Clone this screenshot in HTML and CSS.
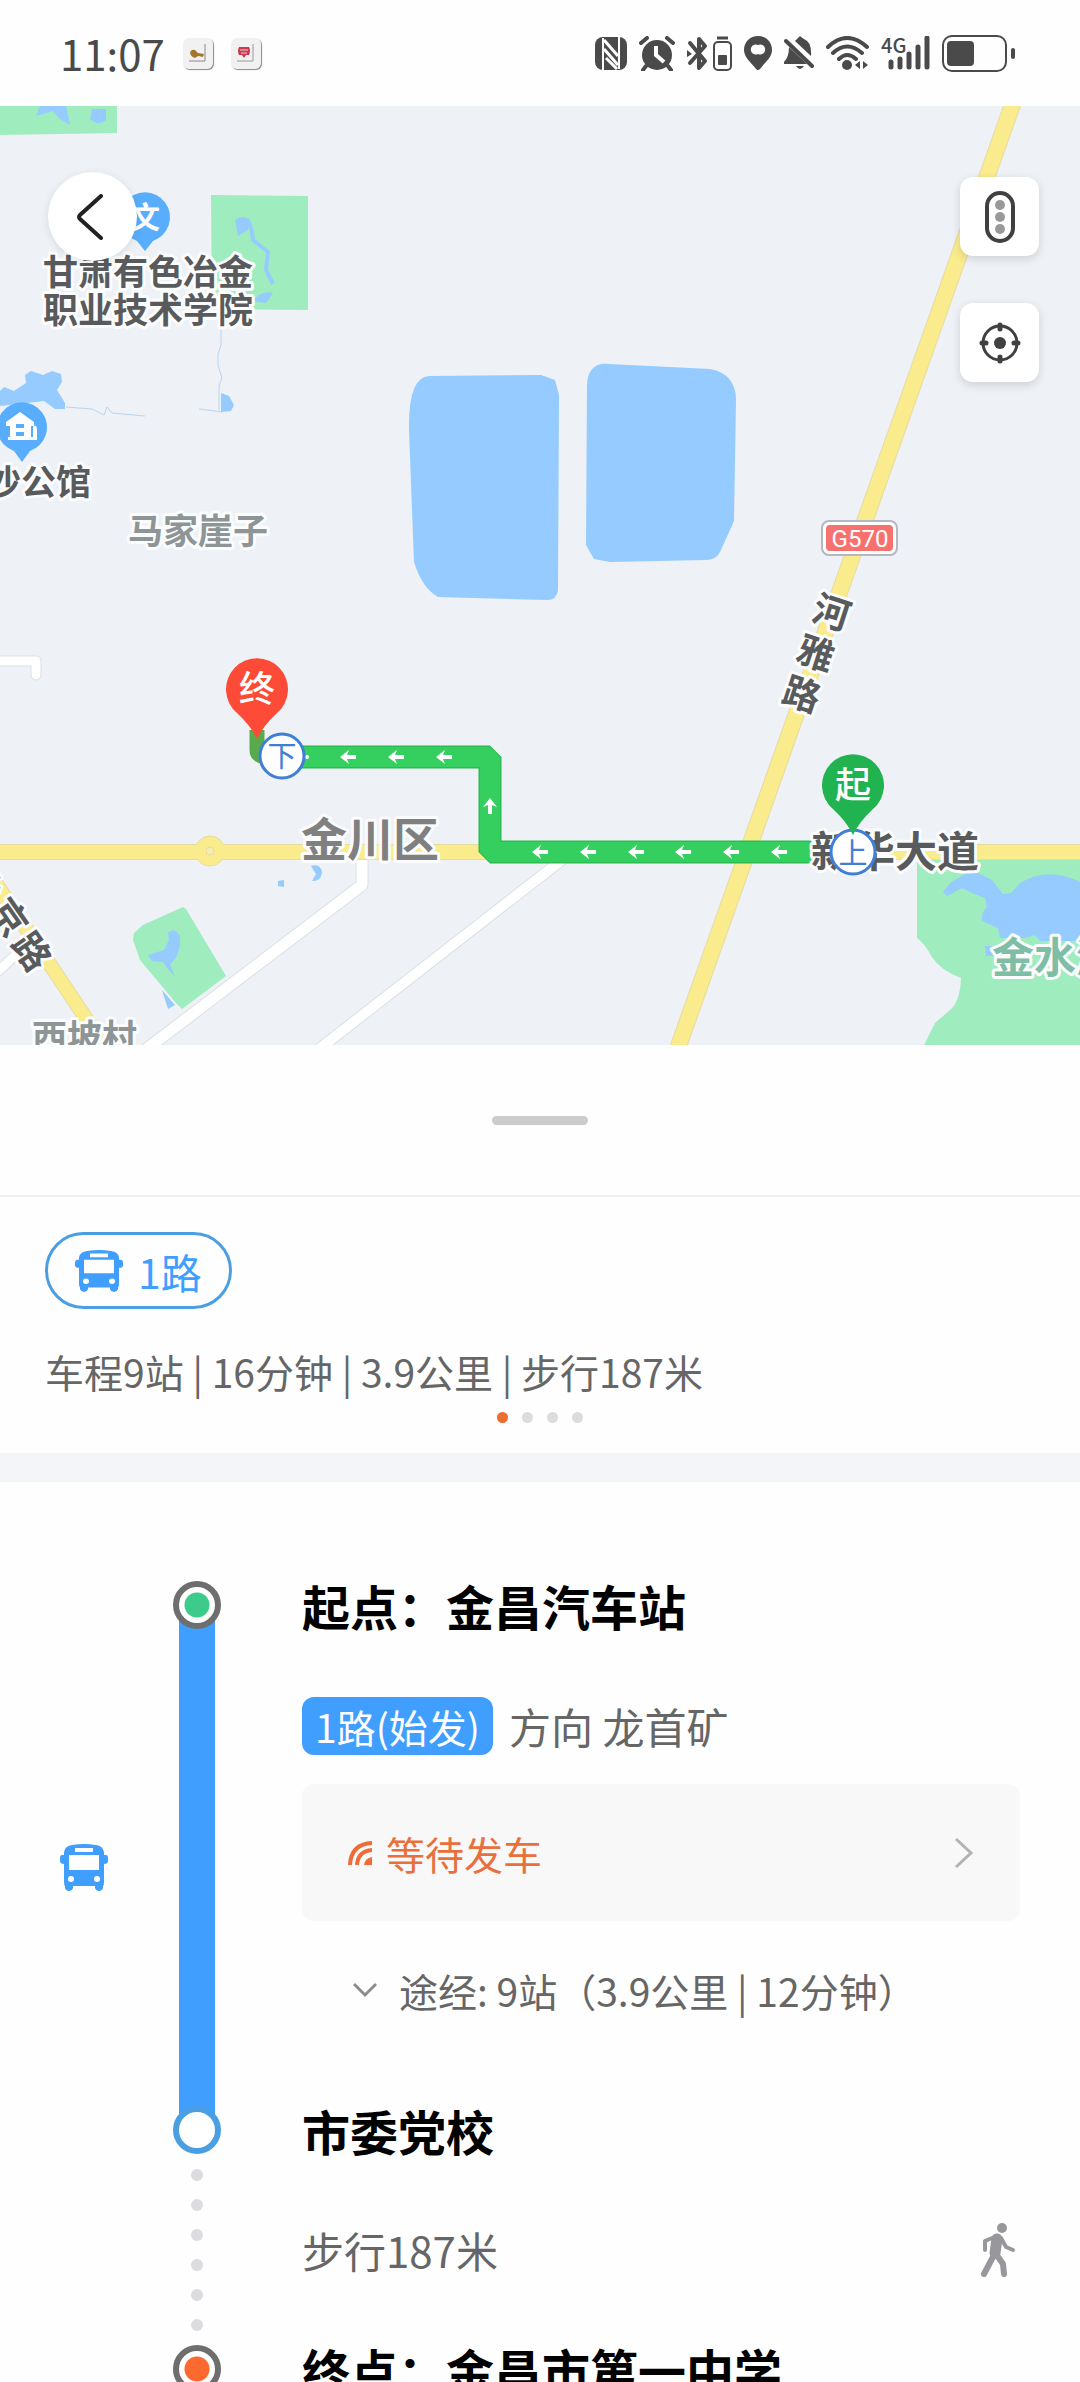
FILE: index.html
```
<!DOCTYPE html>
<html lang="zh-CN">
<head>
  <meta charset="UTF-8">
  <meta name="viewport" content="width=device-width, initial-scale=1.0">
  <title>公交路线 - 1路</title>
  <link rel="stylesheet" href="styles.css">
</head>
<body>
  <!-- Shared icons -->
  <svg class="sprite" aria-hidden="true">
    <symbol id="icon-bus" viewBox="0 0 48 47" preserveAspectRatio="none">
      <path fill="currentColor" fill-rule="evenodd" d="M12 1 Q24 -1 36 1 Q43 2 44 8 V11 H46 Q48 11 48 14 V17 Q48 20 44 20 V38 Q44 41 43 42 V44 Q42 47 39 47 Q36 47 35 44 V42 H13 V44 Q12 47 9 47 Q6 47 5 44 V42 Q4 41 4 38 V20 Q0 20 0 17 V14 Q0 11 2 11 H4 V8 Q5 2 12 1 Z M15 4 V8 H33 V4 Z M9 11 V26 H39 V11 Z M11 32 A3 3 0 1 0 11 38 A3 3 0 1 0 11 32 Z M37 32 A3 3 0 1 0 37 38 A3 3 0 1 0 37 32 Z"/>
    </symbol>
    <symbol id="arrow" viewBox="-9 -9 18 18">
      <path d="M-8 0 L1 -7 L-1 -2 H8 V2 H-1 L1 7 Z" fill="#fff"/>
    </symbol>
  </svg>

  <div class="app">
    <header class="status-bar">
      <div class="status-left">
        <span class="time">11:07</span>
        <span class="notice">
          <svg width="30" height="31" viewBox="0 0 30 31" aria-hidden="true">
            <path d="M22 6 V23 H6" fill="none" stroke="#888" stroke-width="1"/>
            <path d="M7 15 Q8 11 12 12 L15 15 L21 16 L20 19 L15 18 L12 20 Q8 19 7 15 Z" fill="#a5752c"/>
          </svg>
        </span>
        <span class="notice">
          <svg width="30" height="31" viewBox="0 0 30 31" aria-hidden="true">
            <path d="M22 6 V23 H6" fill="none" stroke="#999" stroke-width="1"/>
            <path d="M8 9 H18 Q20 12 18 17 H15 L13 20 L11 17 H8 Q6 13 8 9 Z" fill="#c83a50"/>
            <path d="M9 12 H17 M10 15 H16" stroke="#f3c9cf" stroke-width="1"/>
          </svg>
        </span>
      </div>
      <div class="status-right">
        <!-- NFC -->
        <svg width="32" height="33" viewBox="0 0 32 33" aria-hidden="true">
          <rect x="0" y="0" width="32" height="33" rx="8" fill="#4a4a4a"/>
          <path d="M8 33 V1 M24 32 V0" stroke="#fff" stroke-width="2"/>
          <path d="M9 3 L23 19 M9 12 L23 28 M11 21 L22 32" fill="none" stroke="#fff" stroke-width="3"/>
        </svg>
        <!-- Alarm -->
        <svg width="36" height="35" viewBox="0 0 36 35" aria-hidden="true">
          <circle cx="18" cy="19" r="15" fill="#4a4a4a"/>
          <path d="M2 7 L8 2 M34 7 L28 2 M7 30 L4 34 M29 30 L32 34" stroke="#4a4a4a" stroke-width="4" stroke-linecap="round"/>
          <path d="M17 10 V19 L25 26" fill="none" stroke="#fff" stroke-width="4"/>
        </svg>
        <!-- Bluetooth with device battery -->
        <svg width="45" height="35" viewBox="0 0 45 35" aria-hidden="true">
          <path d="M3 7 L18 25 L12 32 V3 L18 10 L3 27" fill="none" stroke="#4a4a4a" stroke-width="4" stroke-linejoin="round" stroke-linecap="round"/>
          <path d="M0 14 L5 18 L0 21 Z" fill="#4a4a4a"/>
          <rect x="27" y="6" width="17" height="28" rx="4" fill="none" stroke="#4a4a4a" stroke-width="2"/>
          <path d="M30 2 H41" stroke="#4a4a4a" stroke-width="3"/>
          <rect x="31" y="19" width="9" height="10" rx="1" fill="#4a4a4a"/>
        </svg>
        <!-- Location -->
        <svg width="28" height="34" viewBox="0 0 28 34" aria-hidden="true">
          <path fill="#4a4a4a" fill-rule="evenodd" d="M14 0 C6 0 0 6 0 14 C0 22 8 27 12 33 Q14 35 16 33 C20 27 28 22 28 14 C28 6 22 0 14 0 Z M14 9 A5 5 0 1 1 14 18 A5 5 0 1 1 14 9 Z"/>
        </svg>
        <!-- Muted -->
        <svg width="30" height="34" viewBox="0 0 30 34" aria-hidden="true">
          <path d="M16 0 Q18 2 20 3 Q28 6 27 20 L11 5 Q13 3 14 2 Z M5 11 L23 28 H0 V26 Q5 21 5 11 Z M12 30 H20 Q16 36 12 30 Z" fill="#4a4a4a"/>
          <path d="M2 5 L28 30" stroke="#4a4a4a" stroke-width="4" stroke-linecap="round"/>
        </svg>
        <!-- Wi-Fi -->
        <svg width="43" height="34" viewBox="0 0 43 34" aria-hidden="true">
          <path d="M2 11 Q21 -7 41 11 M7 17 Q21 4 36 17 M13 23 Q21 15 30 23" fill="none" stroke="#4a4a4a" stroke-width="4" stroke-linecap="round"/>
          <circle cx="21" cy="29" r="5" fill="#4a4a4a"/>
          <path d="M34 25 V33 L29 29 Z M37 25 V33 L42 29 Z" fill="#4a4a4a"/>
        </svg>
        <!-- Signal -->
        <svg width="49" height="34" viewBox="0 0 49 34" aria-hidden="true">
          <text x="0" y="17" class="net">4G</text>
          <path d="M10 26 V31 M19 23 V31 M28 18 V31 M37 11 V31 M46 2 V31" stroke="#4a4a4a" stroke-width="5" stroke-linecap="round"/>
        </svg>
        <!-- Battery -->
        <svg width="73" height="37" viewBox="0 0 73 37" aria-hidden="true">
          <rect x="1" y="1" width="63" height="35" rx="9" fill="none" stroke="#4a4a4a" stroke-width="2"/>
          <rect x="5" y="6" width="27" height="25" rx="4" fill="#4a4a4a"/>
          <rect x="69" y="13" width="4" height="11" rx="2" fill="#4a4a4a"/>
        </svg>
      </div>
    </header>

    <section class="map">
      <svg class="map-canvas" viewBox="0 106 1080 939" role="img" aria-label="路线地图">
        <!-- Parks -->
        <g fill="#9fecbf">
          <path d="M0 106 H117 V133 L0 135 Z"/>
          <path d="M211 195 L308 196 V310 L212 309 Z"/>
          <path d="M134 933 L143 925 L183 907 L186 909 L226 976 L182 1009 L176 1003 L140 960 L133 940 Z"/>
          <path d="M917 860 H1080 V1045 H924 L935 1023 L950 1010 Q960 1002 961 978 Q940 970 932 957 Q925 944 917 938 Z"/>
        </g>

        <!-- Water -->
        <g fill="#95cbfe">
          <path d="M40 106 H66 L70 125 L60 119 L53 111 L36 116 Z M92 109 H106 V120 Q99 127 90 119 Z"/>
          <path d="M0 391 L4 387 L14 391 L26 383 L25 375 L31 371 L43 375 L52 371 L61 374 L62 382 L57 390 L65 403 L65 409 L55 409 L44 401 L0 406 Z"/>
          <path d="M409 430 Q408 376 430 376 L541 375 L555 380 L559 395 L558 590 Q557 600 547 600 L438 597 Q422 588 414 562 Z"/>
          <path d="M587 385 Q588 362 609 364 L710 369 Q736 374 736 400 L734 521 L720 552 Q716 560 706 560 L610 562 L594 559 L586 545 Z"/>
          <path d="M943 892 L950 883 L965 874 L978 873 L992 880 L1003 894 L1011 893 L1020 883 Q1048 866 1080 882 V941 H1040 L1035 935 L1025 938 L1000 938 L998 928 L982 921 Q981 912 987 907 L985 898 L972 893 L962 888 L947 896 Z"/>
          <path d="M985 946 H1000 V956 H986 Z"/>
          <path d="M168 932 L174 930 L180 935 L180 946 L176 958 L170 964 L175 977 L167 968 L163 962 L152 961 L148 955 L164 950 L169 940 Z M162 990 L175 1005 L168 1009 Z"/>
          <path d="M278 881 L284 880 V887 L278 886 Z M311 866 Q321 863 322 873 Q320 882 312 881 L316 874 Z"/>
          <path d="M221 393 L229 396 L234 405 L231 411 L221 412 Z M253 301 Q262 290 273 293 L266 303 Z"/>
        </g>
        <path d="M235 220 Q243 214 250 220 L248 230 L238 236 Z" fill="#95cbfe"/>
        <path d="M248 220 Q252 228 253 240 L268 252 L266 270 L273 284" fill="none" stroke="#95cbfe" stroke-width="4"/>
        <path d="M221 330 V345 L218 354 V365 L222 378 L219 386 V410 M66 407 L92 409 L104 415 L107 407 L112 413 L145 416 M199 409 L223 412" fill="none" stroke="#b9d4ee" stroke-width="1"/>

        <!-- Minor roads -->
        <g fill="none" stroke-linejoin="round">
          <g stroke="#dcdfe5">
            <path d="M-5 661 H36 V675" stroke-width="11" stroke-linecap="round"/>
            <path d="M-6 975 L36 936" stroke-width="11"/>
            <path d="M362 852 V885 L140 1054" stroke-width="13"/>
            <path d="M572 852 L310 1056" stroke-width="12"/>
          </g>
          <g stroke="#fff">
            <path d="M-5 661 H36 V675" stroke-width="9" stroke-linecap="round"/>
            <path d="M-6 975 L36 936" stroke-width="9"/>
            <path d="M362 852 V885 L140 1054" stroke-width="11"/>
            <path d="M572 852 L310 1056" stroke-width="10"/>
          </g>
        </g>

        <!-- Main roads -->
        <g fill="none" stroke="#e6dca0">
          <path d="M-5 882 L105 1047" stroke-width="15"/>
          <path d="M0 852 H1080" stroke-width="16"/>
          <path d="M1017 92 L675 1056" stroke-width="17"/>
        </g>
        <circle cx="210" cy="851" r="15" fill="#faec8d" stroke="#e6dca0"/>
        <g fill="none" stroke="#faec8d">
          <path d="M-5 882 L105 1047" stroke-width="13"/>
          <path d="M0 852 H1080" stroke-width="14"/>
          <path d="M1017 92 L675 1056" stroke-width="15"/>
        </g>
        <circle cx="210" cy="851" r="4" fill="#f5ecb4" stroke="#e6dca0"/>

        <!-- Bus route -->
        <path d="M257 730 V750 Q257 757 268 757" fill="none" stroke="#58aa4c" stroke-width="15"/>
        <path d="M290 757 H490 V852 H815" fill="none" stroke="#2bbb53" stroke-width="23" stroke-linejoin="bevel"/>
        <path d="M290 757 H490 V852 H815" fill="none" stroke="#34cf5e" stroke-width="20" stroke-linejoin="bevel"/>
        <use href="#arrow" x="339" y="748" width="18" height="18"/>
        <use href="#arrow" x="387" y="748" width="18" height="18"/>
        <use href="#arrow" x="435" y="748" width="18" height="18"/>
        <use href="#arrow" x="481" y="797" width="18" height="18" transform="rotate(90 490 806)"/>
        <use href="#arrow" x="531" y="843" width="18" height="18"/>
        <use href="#arrow" x="579" y="843" width="18" height="18"/>
        <use href="#arrow" x="627" y="843" width="18" height="18"/>
        <use href="#arrow" x="674" y="843" width="18" height="18"/>
        <use href="#arrow" x="722" y="843" width="18" height="18"/>
        <use href="#arrow" x="770" y="843" width="18" height="18"/>
        <circle cx="307" cy="757" r="2" fill="#fff"/>

        <!-- Place pins -->
        <path d="M145 251 L137 241 A25 25 0 1 1 153 241 Z" fill="#58aefc"/>
        <text x="145" y="228" class="pin-text poi">文</text>
        <path d="M22 462 L14 451 A25 25 0 1 1 30 451 Z" fill="#58aefc"/>
        <path fill="#fff" fill-rule="evenodd" d="M20 412 L34 422 V426 H31 V437 H33 V427 Q36 423 37 429 V440 H8 V437 H10 V426 H6 V422 Z M16 424 V428 H24 V424 Z M16 432 V436 H24 V432 Z"/>

        <!-- Labels -->
        <g class="label">
          <text x="43" y="285" class="place">甘肃有色冶金</text>
          <text x="43" y="323" class="place">职业技术学院</text>
          <text x="91" y="495" class="place" text-anchor="end">沙公馆</text>
          <text x="128" y="544" class="place village">马家崖子</text>
          <text x="32" y="1050" class="place village">西坡村</text>
          <text x="301" y="856" class="district">金川区</text>
          <text x="811" y="867" class="road">新华大道</text>
          <text x="992" y="973" class="road park">金水湖</text>
        </g>
        <g class="label road-sm" text-anchor="middle">
          <text transform="translate(832 612) rotate(18)" y="14">河</text>
          <text transform="translate(816 653) rotate(18)" y="14">雅</text>
          <text transform="translate(802 694) rotate(18)" y="14">路</text>
          <text transform="translate(-17 882) rotate(55)" y="14">北</text>
          <text transform="translate(9 917) rotate(55)" y="14">京</text>
          <text transform="translate(32 951) rotate(55)" y="14">路</text>
        </g>

        <!-- Highway shield -->
        <rect x="822" y="521" width="75" height="34" rx="7" fill="#fff" stroke="#b4b8c0" stroke-width="2"/>
        <rect x="826" y="525" width="67" height="26" rx="4" fill="#f7716f"/>
        <text x="860" y="547" class="shield">G570</text>

        <!-- Stops and route ends -->
        <circle cx="282" cy="756" r="22" fill="#fff" stroke="#3f7fd6" stroke-width="3"/>
        <text x="282" y="767" class="pin-text stop-text">下</text>
        <circle cx="853" cy="852" r="22" fill="#fff" stroke="#3f7fd6" stroke-width="3"/>
        <text x="853" y="864" class="pin-text stop-text">上</text>
        <path d="M257 739 Q251 726 237 713 A31 31 0 1 1 277 713 Q263 726 257 739 Z" fill="#fd4b38"/>
        <text x="257" y="702" class="pin-text">终</text>
        <path d="M853 835 Q847 822 833 809 A31 31 0 1 1 873 809 Q859 822 853 835 Z" fill="#20b34f"/>
        <text x="853" y="798" class="pin-text">起</text>
      </svg>

      <button class="back" type="button" aria-label="返回">
        <svg width="26" height="46" viewBox="0 0 26 46" aria-hidden="true">
          <path d="M24 2 L3 21 Q1 23 3 25 L24 44" fill="none" stroke="#222" stroke-width="4" stroke-linecap="round"/>
        </svg>
      </button>
      <div class="map-tools">
        <button class="tool" type="button" aria-label="路况">
          <svg width="30" height="52" viewBox="0 0 30 52" aria-hidden="true">
            <rect x="2" y="2" width="26" height="48" rx="13" fill="none" stroke="#404040" stroke-width="4"/>
            <g fill="#999"><circle cx="15" cy="14" r="5"/><circle cx="15" cy="26" r="5"/><circle cx="15" cy="38" r="5"/></g>
          </svg>
        </button>
        <button class="tool" type="button" aria-label="定位">
          <svg width="42" height="42" viewBox="0 0 42 42" aria-hidden="true">
            <circle cx="21" cy="21" r="17" fill="none" stroke="#404040" stroke-width="3"/>
            <circle cx="21" cy="21" r="6" fill="#404040"/>
            <path d="M21 3 V7 M21 35 V39 M3 21 H7 M35 21 H39" stroke="#404040" stroke-width="5" stroke-linecap="round"/>
          </svg>
        </button>
      </div>
    </section>

    <main class="sheet">
      <div class="sheet-handle"><span class="grip"></span></div>

      <section class="summary">
        <span class="line-pill">
          <svg width="48" height="42" aria-hidden="true"><use href="#icon-bus" width="48" height="42"/></svg>
          1路
        </span>
        <p class="summary-text">车程9站 | 16分钟 | 3.9公里 | 步行187米</p>
        <div class="pager">
          <span class="dot active"></span>
          <span class="dot"></span>
          <span class="dot"></span>
          <span class="dot"></span>
        </div>
      </section>

      <ol class="timeline">
        <li class="row stop">
          <span class="node start"></span>
          <h2>起点：金昌汽车站</h2>
        </li>

        <li class="row leg">
          <svg class="leg-icon" width="48" height="47" aria-hidden="true"><use href="#icon-bus" width="48" height="47"/></svg>
          <span class="rail"></span>
          <div class="leg-body">
            <p class="direction"><span class="tag">1路(始发)</span>方向 龙首矿</p>
            <button class="wait" type="button">
              <svg width="24" height="24" viewBox="0 0 24 24" aria-hidden="true">
                <path d="M24 24 H16 Q17 17 24 16 Z" fill="#ee6c38"/>
                <path d="M2 24 Q3 3 24 2 M9 24 Q10 10 24 9" fill="none" stroke="#ee6c38" stroke-width="4"/>
              </svg>
              <span class="wait-text">等待发车</span>
              <svg width="20" height="32" viewBox="0 0 20 32" aria-hidden="true">
                <path d="M2 2 L17 16 L2 30" fill="none" stroke="#b3b3b3" stroke-width="3"/>
              </svg>
            </button>
            <button class="via" type="button">
              <svg width="24" height="16" viewBox="0 0 24 16" aria-hidden="true">
                <path d="M1 2 L12 13 L23 2" fill="none" stroke="#8c8c8c" stroke-width="3"/>
              </svg>
              途经: 9站（3.9公里 | 12分钟）
            </button>
          </div>
        </li>

        <li class="row stop">
          <span class="node middle"></span>
          <h2>市委党校</h2>
        </li>

        <li class="row walk">
          <span class="rail-dots"><i></i><i></i><i></i><i></i><i></i><i></i></span>
          <div class="walk-body">
            <p>步行187米</p>
            <svg width="45" height="54" viewBox="0 0 45 54" aria-hidden="true">
              <g fill="none" stroke="#97979c" stroke-linecap="round" stroke-linejoin="round">
                <circle cx="27" cy="5" r="5" fill="#97979c" stroke="none"/>
                <path d="M22 13 L10 18 V27 M26 15 L31 24 L38 27" stroke-width="4"/>
                <path d="M22 16 L20 30" stroke-width="11"/>
                <path d="M19 32 L9 51 M21 31 L28 41 L29 51" stroke-width="6"/>
              </g>
            </svg>
          </div>
        </li>

        <li class="row stop">
          <span class="node end"></span>
          <h2>终点：金昌市第一中学</h2>
        </li>
      </ol>
    </main>
  </div>
</body>
</html>
```
FILE: styles.css
```
/* General Styles */
* {
  box-sizing: border-box;
}

body {
  margin: 0;
  font-family: "Noto Sans CJK SC", sans-serif;
  font-size: 39px;
  line-height: 54px;
  color: #666;
  background: #fefefe;
}

h2, p, ol {
  margin: 0;
  padding: 0;
}

button {
  font: inherit;
  color: inherit;
  border: none;
  padding: 0;
  cursor: pointer;
}

svg {
  display: block;
  flex: none;
}

.sprite {
  position: absolute;
  width: 0;
  height: 0;
}

.app {
  display: flex;
  flex-direction: column;
  height: 100vh;
  overflow: hidden;
}

/* Status bar */
.status-bar {
  flex: none;
  display: flex;
  justify-content: space-between;
  align-items: center;
  height: 106px;
  padding: 0 65px 0 60px;
}

.status-left,
.status-right {
  display: flex;
  align-items: center;
}

.status-left {
  gap: 18px;
}

.status-right {
  gap: 12px;
}

.time {
  font-size: 42px;
  color: #4a4a4a;
}

.notice {
  background: #f1f1f1;
  border-radius: 6px;
  box-shadow: 1px 1px 1px #888;
}

.net {
  font-size: 20px;
  font-weight: 500;
  fill: #4a4a4a;
}

/* Map */
.map {
  flex: none;
  position: relative;
  background: #eef1f6;
}

.map-canvas {
  width: 100%;
  height: auto;
}

.label {
  font-weight: 700;
  fill: #585a5c;
  stroke: #fbfcfd;
  stroke-width: 6px;
  stroke-linejoin: round;
  paint-order: stroke;
}

.place {
  font-size: 35px;
}

.village {
  fill: #8d9596;
}

.district {
  font-size: 46px;
  fill: #808080;
}

.road {
  font-size: 42px;
}

.road-sm {
  font-size: 37px;
}

.park {
  fill: #7fbda5;
}

.shield {
  font-family: Roboto, sans-serif;
  font-size: 24px;
  text-anchor: middle;
  fill: #fff;
}

.pin-text {
  font-size: 36px;
  font-weight: 500;
  text-anchor: middle;
  fill: #fff;
}

.poi {
  font-size: 30px;
  font-weight: 700;
}

.stop-text {
  font-size: 29px;
  font-weight: 400;
  fill: #3f7fd6;
}

.back,
.tool {
  display: flex;
  align-items: center;
  justify-content: center;
  background: #fff;
}

.back {
  position: absolute;
  left: 48px;
  top: 66px;
  width: 89px;
  height: 89px;
  padding-right: 6px;
  border-radius: 50%;
  box-shadow: 0 2px 8px rgba(0, 0, 0, 0.1);
}

.map-tools {
  position: absolute;
  right: 41px;
  top: 71px;
  display: flex;
  flex-direction: column;
  gap: 47px;
}

.tool {
  width: 79px;
  height: 79px;
  border-radius: 13px;
  box-shadow: 0 3px 10px rgba(0, 0, 0, 0.14);
}

/* Bottom sheet */
.sheet {
  flex: 1;
  min-height: 0;
  overflow: hidden;
}

.sheet-handle {
  display: flex;
  align-items: center;
  justify-content: center;
  height: 152px;
  border-bottom: 2px solid #f0f0f0;
}

.grip {
  width: 96px;
  height: 9px;
  border-radius: 5px;
  background: #ccc;
}

/* Route summary */
.summary {
  padding: 35px 45px 30px;
  border-bottom: 29px solid #f3f5f9;
}

.line-pill {
  display: inline-flex;
  align-items: center;
  gap: 15px;
  height: 77px;
  padding: 0 27px;
  border: 3px solid #4a9fe3;
  border-radius: 39px;
  font-size: 41px;
  color: #409eff;
  vertical-align: top;
}

.summary-text {
  margin-top: 35px;
}

.pager {
  display: flex;
  justify-content: center;
  gap: 14px;
  margin-top: 14px;
}

.dot {
  width: 11px;
  height: 11px;
  border-radius: 50%;
  background: #dcdcdc;
}

.dot.active {
  background: #ec6c34;
}

/* Timeline */
.timeline {
  list-style: none;
  padding: 99px 60px 60px 0;
}

.row {
  display: grid;
  grid-template-columns: 173px 48px 1fr;
}

.stop {
  position: relative;
  z-index: 1;
  align-items: center;
  height: 48px;
}

.stop h2 {
  padding-left: 81px;
  font-size: 48px;
  line-height: 48px;
  font-weight: 700;
  color: #000;
}

.node {
  grid-column: 2;
  width: 48px;
  height: 48px;
  border: 6px solid #6e6e6e;
  border-radius: 50%;
  background: #fff;
}

.start {
  background: radial-gradient(circle, #3dcb8b 12px, #fff 13px);
}

.middle {
  border-color: #4a9fe3;
}

.end {
  background: radial-gradient(circle, #fd6a30 12px, #fff 13px);
}

.leg-icon {
  align-self: center;
  margin-left: 60px;
  color: #409eff;
}

/* Runs behind the nodes above and below it */
.rail {
  width: 36px;
  margin: -24px auto;
  background: #409eff;
}

.leg-body {
  padding: 68px 0 89px 81px;
}

.direction {
  display: flex;
  align-items: center;
  gap: 16px;
  font-size: 42px;
}

.tag {
  padding: 0 13px;
  border-radius: 12px;
  font-size: 39px;
  line-height: 58px;
  color: #fff;
  background: #409eff;
}

.wait {
  display: flex;
  align-items: center;
  gap: 14px;
  width: 100%;
  height: 137px;
  margin-top: 29px;
  padding: 0 46px;
  border-radius: 12px;
  background: #f8f8f8;
}

.wait-text {
  flex: 1;
  text-align: left;
  color: #e8703c;
}

.via {
  display: flex;
  align-items: center;
  gap: 22px;
  margin: 42px 0 0 51px;
  background: none;
}

.rail-dots {
  grid-column: 2;
  display: flex;
  flex-direction: column;
  align-items: center;
  justify-content: center;
  gap: 18px;
}

.rail-dots i {
  width: 12px;
  height: 12px;
  border-radius: 50%;
  background: #dcdce0;
}

.walk-body {
  display: flex;
  align-items: center;
  justify-content: space-between;
  height: 191px;
  padding-left: 81px;
  font-size: 42px;
}
```
